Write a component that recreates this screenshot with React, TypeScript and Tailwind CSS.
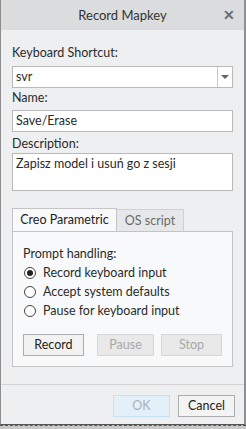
const font = { fontFamily: 'Lato, "Open Sans", Arial, sans-serif' };

function Radio({ checked, label }: { checked?: boolean; label: string }) {
  return (
    <div className="flex h-[19px] items-center gap-[7px] pl-[1px]">
      <span className="flex h-[12px] w-[12px] items-center justify-center rounded-full border border-[#444444] bg-white">
        {checked ? <span className="h-[6px] w-[6px] rounded-full bg-[#222222]" /> : null}
      </span>
      <span>{label}</span>
    </div>
  );
}

function Btn({ label, disabled, className = '' }: { label: string; disabled?: boolean; className?: string }) {
  return (
    <div
      className={
        'flex h-[22px] items-center justify-center border ' +
        (disabled ? 'border-[#d6d6d6] bg-[#e9e9e9] text-[#a8a8a8] ' : 'border-[#adadad] bg-[#f2f2f2] text-[#222222] ') +
        className
      }
    >
      {label}
    </div>
  );
}

export default function App() {
  return (
    <div className="h-[429px] w-[246px] bg-[#c8c8c8] text-[12.5px] leading-[16px] text-[#2b2b2b]" style={font}>
      <div className="flex h-[425px] flex-col border-l border-r-2 border-b border-l-[#8c8c8c] border-r-[#8f8f8f] border-b-[#555555] bg-[#eeeff0]">
        <div className="relative flex h-[30px] shrink-0 items-center justify-center bg-[#dbdcdd] text-[13px] text-[#333333]">
          Record Mapkey
          <span className="absolute right-[9px] top-[7px] text-[14px] font-bold text-[#6d6d6d]">✕</span>
        </div>

        <div className="flex flex-col px-[11px]">
          <div className="mt-[15px] mb-[5px]">Keyboard Shortcut:</div>
          <div className="flex h-[22px] border border-[#b9b9b9] bg-white">
            <div className="flex flex-1 items-center pl-[3px]">svr</div>
            <div className="flex w-[15px] items-center justify-center border-l border-[#c9c9c9]">
              <span className="h-0 w-0 border-l-[4px] border-r-[4px] border-t-[4px] border-l-transparent border-r-transparent border-t-[#666666]" />
            </div>
          </div>

          <div className="mt-[2px] mb-[4px]">Name:</div>
          <div className="flex h-[22px] items-center border border-[#b9b9b9] bg-white pl-[3px]">Save/Erase</div>

          <div className="mt-[4px] mb-[1px]">Description:</div>
          <div className="h-[38px] border border-[#b9b9b9] bg-white px-[3px] pt-[2px]">Zapisz model i usuń go z sesji</div>

          <div className="mt-[17px] flex h-[23px]">
            <div className="flex w-[105px] items-center justify-center border border-b-0 border-[#c4c4c4] bg-[#f8f9fa] text-[#222222]">
              Creo Parametric
            </div>
            <div className="mt-[1px] flex w-[67px] items-center justify-center border border-l-0 border-b-0 border-[#d0d0d0] bg-[#e6e7e8] text-[#6a6a6a]">
              OS script
            </div>
          </div>
          <div className="flex h-[136px] flex-col border border-[#c4c4c4] bg-[#f8f9fa] px-[10px]">
            <div className="mt-[14px] mb-[1px]">Prompt handling:</div>
            <Radio checked label="Record keyboard input" />
            <Radio label="Accept system defaults" />
            <Radio label="Pause for keyboard input" />
            <div className="mt-[14px] flex">
              <Btn label="Record" className="w-[62px]" />
              <Btn label="Pause" disabled className="ml-[13px] w-[58px]" />
              <Btn label="Stop" disabled className="ml-[7px] w-[62px]" />
            </div>
          </div>
        </div>

        <div className="mt-[17px] border-t border-[#d2d2d2]" />
        <div className="mt-[10px] flex justify-end gap-[8px] pr-[9px]">
          <div className="flex h-[22px] w-[57px] items-center justify-center border border-[#c6e0f5] bg-[#e3eff9] text-[#a9b2ba]">OK</div>
          <Btn label="Cancel" className="w-[57px] bg-[#f4f4f4]" />
        </div>
      </div>
      <div className="h-[4px] border-t border-dashed border-[#555555]" />
    </div>
  );
}
